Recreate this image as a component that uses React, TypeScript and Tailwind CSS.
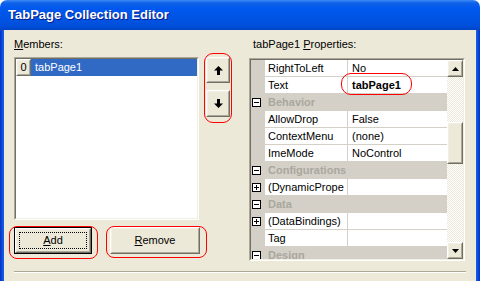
type Row = {
  cat?: boolean;
  name: string;
  value?: string;
  bold?: boolean;
  plus?: boolean;
  mark?: boolean;
};

const rows: Row[] = [
  { name: "RightToLeft", value: "No" },
  { name: "Text", value: "tabPage1", bold: true, mark: true },
  { cat: true, name: "Behavior" },
  { name: "AllowDrop", value: "False" },
  { name: "ContextMenu", value: "(none)" },
  { name: "ImeMode", value: "NoControl" },
  { cat: true, name: "Configurations" },
  { name: "(DynamicPrope", value: "", plus: true },
  { cat: true, name: "Data" },
  { name: "(DataBindings)", value: "", plus: true },
  { name: "Tag", value: "" },
  { cat: true, name: "Design" },
];

function ExpandBox({ plus }: { plus?: boolean }) {
  return (
    <div className="relative w-[9px] h-[9px] border border-black bg-white">
      <div className="absolute left-[1px] top-[3px] w-[5px] h-[1px] bg-black" />
      {plus && <div className="absolute left-[3px] top-[1px] w-[1px] h-[5px] bg-black" />}
    </div>
  );
}

function Raised({ className, children }: { className?: string; children?: React.ReactNode }) {
  return (
    <div
      className={
        "border border-t-white border-l-white border-r-[#716f64] border-b-[#716f64] bg-[#ece9d8] " +
        (className ?? "")
      }
    >
      <div className="w-full h-full border border-t-[#f1efe2] border-l-[#f1efe2] border-r-[#aca899] border-b-[#aca899] flex items-center justify-center">
        {children}
      </div>
    </div>
  );
}

function Arrow({ down }: { down?: boolean }) {
  return (
    <svg width="9" height="9" viewBox="0 0 9 9" className={down ? "rotate-180" : ""}>
      <polygon points="4.5,0 9,4.5 6,4.5 6,9 3,9 3,4.5 0,4.5" fill="#000" />
    </svg>
  );
}

function Tri({ down }: { down?: boolean }) {
  return (
    <svg width="7" height="4" viewBox="0 0 7 4">
      <polygon points={down ? "0,0 7,0 3.5,4" : "3.5,0 7,4 0,4"} fill="#000" />
    </svg>
  );
}

export default function App() {
  return (
    <div className="w-[480px] h-[281px] overflow-hidden bg-white font-['Liberation_Sans',Arial,sans-serif] text-[11px] text-black">
      <div className="flex flex-col h-full rounded-t-[7px] overflow-hidden">
        {/* Title bar */}
        <div className="h-[30px] shrink-0 flex items-center pl-[8px] bg-[linear-gradient(to_bottom,#3b8cf5_0px,#0f61e8_3px,#0058ee_8px,#0054e3_18px,#004fdb_26px,#0043c4_30px)]">
          <span className="text-white font-bold text-[13px] [text-shadow:1px_1px_#0a1a8a] pb-[1px]">
            TabPage Collection Editor
          </span>
        </div>

        <div className="flex flex-1 min-h-0">
          <div className="w-[4px] bg-[linear-gradient(to_right,#0732c4,#0a49d8_50%,#1a62ee)]" />

          <div className="flex-1 bg-[#ece9d8] pt-[8px] pl-[10px]">
            <div className="flex">
              {/* Members column */}
              <div className="w-[185px] flex flex-col">
                <div className="h-[13px] leading-[13px]">
                  <u>M</u>embers:
                </div>
                <div className="mt-[6px] h-[163px] border border-t-[#aca899] border-l-[#aca899] border-r-white border-b-white">
                  <div className="h-full border border-t-[#716f64] border-l-[#716f64] border-r-[#f1efe2] border-b-[#f1efe2] bg-white">
                    <div className="flex h-[17px]">
                      <Raised className="w-[15px] h-[17px]">
                        <span className="leading-[13px]">0</span>
                      </Raised>
                      <div className="flex-1 bg-[#316ac5] text-white pl-[4px] leading-[17px]">tabPage1</div>
                    </div>
                  </div>
                </div>
                <div className="mt-[7px] flex">
                  <div className="relative">
                    <div className="w-[78px] h-[27px] border border-black">
                      <Raised className="w-full h-full">
                        <div className="w-[68px] h-[17px] border border-dotted border-black flex items-center justify-center">
                          <span>
                            <u>A</u>dd
                          </span>
                        </div>
                      </Raised>
                    </div>
                    <div className="absolute left-[-5px] top-[-1px] w-[89px] h-[33px] rounded-[8px] border border-[#ff0000]" />
                  </div>
                  <div className="relative ml-[18px]">
                    <Raised className="w-[90px] h-[27px]">
                      <span>
                        <u>R</u>emove
                      </span>
                    </Raised>
                    <div className="absolute left-[-4px] top-[-1px] w-[101px] h-[32px] rounded-[8px] border border-[#ff0000]" />
                  </div>
                </div>
              </div>

              {/* Move buttons */}
              <div className="relative ml-[7px] mt-[19px] self-start w-[24px] flex flex-col gap-[7px]">
                <Raised className="w-[24px] h-[26px]">
                  <Arrow />
                </Raised>
                <Raised className="w-[24px] h-[27px]">
                  <Arrow down />
                </Raised>
                <div className="absolute left-[-2px] top-[-4px] w-[28px] h-[70px] rounded-[9px] border border-[#ff0000]" />
              </div>

              {/* Properties */}
              <div className="ml-[19px] w-[216px] flex flex-col">
                <div className="h-[13px] leading-[13px] pl-[4px]">
                  tabPage1 <u>P</u>roperties:
                </div>
                <div className="mt-[7px] h-[203px] border border-t-[#aca899] border-l-[#aca899] border-r-white border-b-white">
                  <div className="h-full flex border border-t-[#716f64] border-l-[#716f64] border-r-[#f1efe2] border-b-[#f1efe2] overflow-hidden">
                    <div className="flex-1 flex flex-col bg-white">
                      {rows.map((r) => (
                        <div key={r.name} className="flex h-[17px] shrink-0">
                          <div className="w-[14px] bg-[#d4d0c8] flex items-center pl-[1px]">
                            {(r.cat || r.plus) && <ExpandBox plus={r.plus} />}
                          </div>
                          {r.cat ? (
                            <div className="flex-1 bg-[#d4d0c8] pl-[3px] leading-[17px] font-bold text-[#aaa79d]">
                              {r.name}
                            </div>
                          ) : (
                            <>
                              <div className="w-[83px] pl-[3px] leading-[16px] whitespace-nowrap overflow-hidden border-b border-r border-[#d4d0c8]">
                                {r.name}
                              </div>
                              <div className="relative flex-1 pl-[4px] leading-[16px] border-b border-[#d4d0c8]">
                                <span className={r.bold ? "font-bold" : ""}>{r.value}</span>
                                {r.mark && (
                                  <div className="absolute left-[-7px] top-[-4px] w-[71px] h-[22px] rounded-[10px] border border-[#ff0000]" />
                                )}
                              </div>
                            </>
                          )}
                        </div>
                      ))}
                    </div>
                    {/* Scrollbar */}
                    <div className="w-[16px] flex flex-col">
                      <Raised className="w-[16px] h-[17px] shrink-0">
                        <Tri />
                      </Raised>
                      <div className="h-[45px] shrink-0 bg-[repeating-conic-gradient(#ece9d8_0_25%,#ffffff_0_50%)] bg-[length:2px_2px]" />
                      <Raised className="w-[16px] h-[42px] shrink-0" />
                      <div className="flex-1 bg-[repeating-conic-gradient(#ece9d8_0_25%,#ffffff_0_50%)] bg-[length:2px_2px]" />
                      <Raised className="w-[16px] h-[17px] shrink-0">
                        <Tri down />
                      </Raised>
                    </div>
                  </div>
                </div>
              </div>
            </div>

            <div className="mt-[10px] w-[452px] border-t border-t-[#aca899] border-b border-b-white" />
          </div>

          <div className="w-[4px] bg-[linear-gradient(to_left,#0732c4,#0a49d8_50%,#1a62ee)]" />
        </div>
      </div>
    </div>
  );
}
